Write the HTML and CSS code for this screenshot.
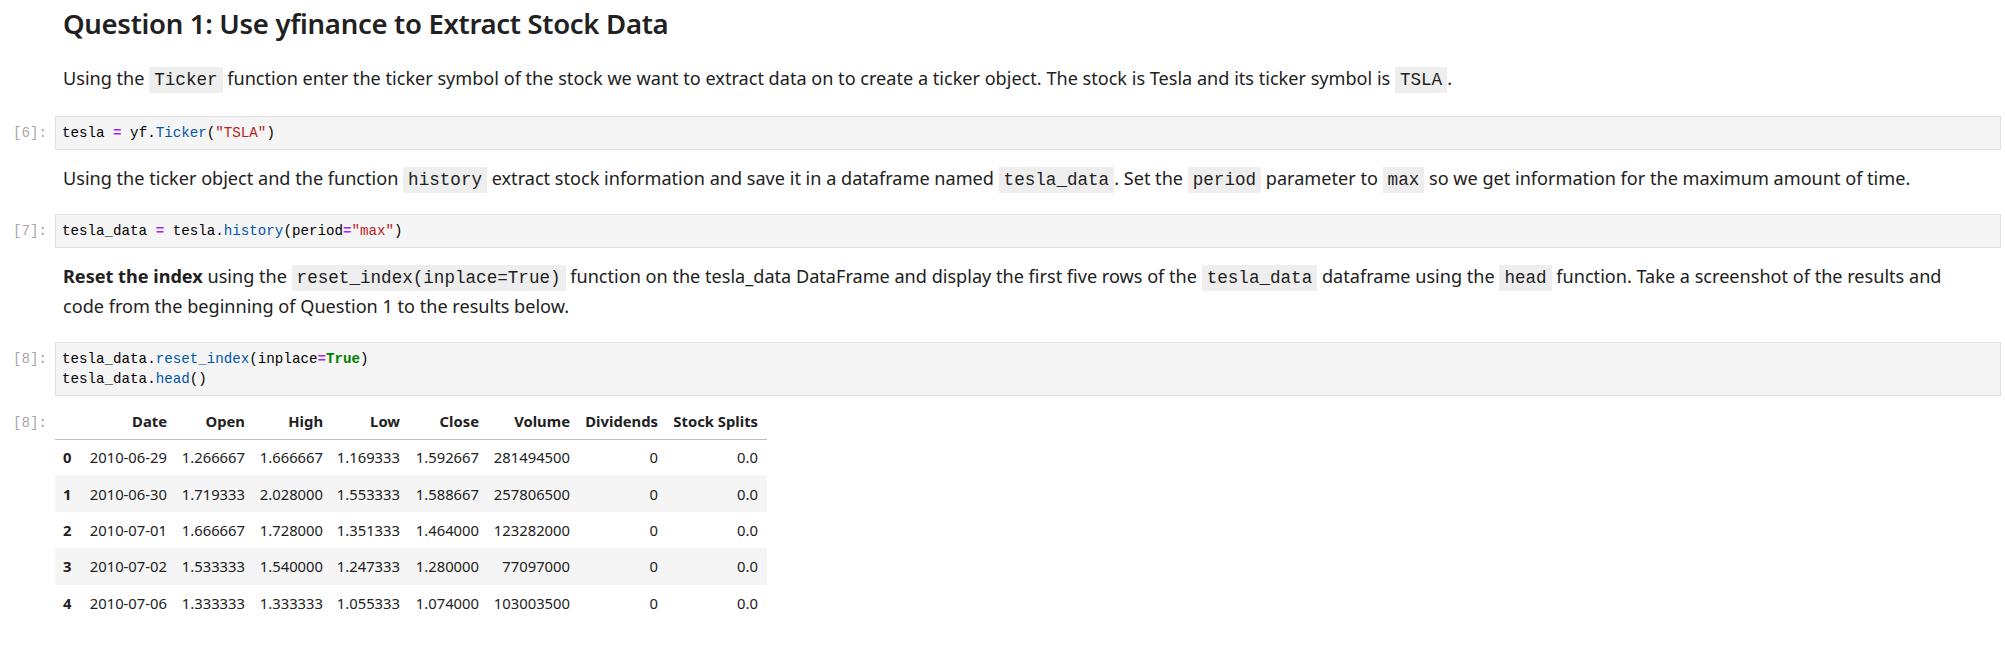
FILE: index.html
```html
<!DOCTYPE html>
<html>
<head>
<meta charset="utf-8">
<link rel="stylesheet" href="styles.css">
</head>
<body>
<div class="notebook">
  <div class="cell md first">
    <div class="prompt"></div>
    <div class="content">
      <h2 class="title">Question 1: Use yfinance to Extract Stock Data</h2>
      <p class="para">Using the <code class="ic">Ticker</code> function enter the ticker symbol of the stock we want to extract data on to create a ticker object. The stock is Tesla and its ticker symbol is <code class="ic">TSLA</code>.</p>
    </div>
  </div>

  <div class="cell code">
    <div class="prompt">[6]:</div>
    <div class="editor"><pre class="src">tesla <span class="op">=</span> yf.<span class="pr">Ticker</span>(<span class="st">"TSLA"</span>)</pre></div>
  </div>

  <div class="cell md">
    <div class="prompt"></div>
    <div class="content">
      <p class="para">Using the ticker object and the function <code class="ic">history</code> extract stock information and save it in a dataframe named <code class="ic">tesla_data</code>. Set the <code class="ic">period</code> parameter to <code class="ic">max</code> so we get information for the maximum amount of time.</p>
    </div>
  </div>

  <div class="cell code">
    <div class="prompt">[7]:</div>
    <div class="editor"><pre class="src">tesla_data <span class="op">=</span> tesla.<span class="pr">history</span>(period<span class="op">=</span><span class="st">"max"</span>)</pre></div>
  </div>

  <div class="cell md">
    <div class="prompt"></div>
    <div class="content">
      <p class="para"><strong>Reset the index</strong> using the <code class="ic">reset_index(inplace=True)</code> function on the tesla_data DataFrame and display the first five rows of the <code class="ic">tesla_data</code> dataframe using the <code class="ic">head</code> function. Take a screenshot of the results and code from the beginning of Question 1 to the results below.</p>
    </div>
  </div>

  <div class="cell code">
    <div class="prompt">[8]:</div>
    <div class="editor"><pre class="src">tesla_data.<span class="pr">reset_index</span>(inplace<span class="op">=</span><span class="kw">True</span>)
tesla_data.<span class="pr">head</span>()</pre></div>
  </div>

  <div class="cell output">
    <div class="prompt out">[8]:</div>
    <div class="outarea">
      <table class="df">
        <colgroup>
          <col class="c-idx"><col class="c-date"><col class="c-num"><col class="c-num"><col class="c-low"><col class="c-close"><col class="c-vol"><col class="c-div"><col class="c-split">
        </colgroup>
        <thead>
          <tr><th></th><th>Date</th><th>Open</th><th>High</th><th>Low</th><th>Close</th><th>Volume</th><th>Dividends</th><th>Stock Splits</th></tr>
        </thead>
        <tbody>
          <tr><th>0</th><td>2010-06-29</td><td>1.266667</td><td>1.666667</td><td>1.169333</td><td>1.592667</td><td>281494500</td><td>0</td><td>0.0</td></tr>
          <tr><th>1</th><td>2010-06-30</td><td>1.719333</td><td>2.028000</td><td>1.553333</td><td>1.588667</td><td>257806500</td><td>0</td><td>0.0</td></tr>
          <tr><th>2</th><td>2010-07-01</td><td>1.666667</td><td>1.728000</td><td>1.351333</td><td>1.464000</td><td>123282000</td><td>0</td><td>0.0</td></tr>
          <tr><th>3</th><td>2010-07-02</td><td>1.533333</td><td>1.540000</td><td>1.247333</td><td>1.280000</td><td>77097000</td><td>0</td><td>0.0</td></tr>
          <tr><th>4</th><td>2010-07-06</td><td>1.333333</td><td>1.333333</td><td>1.055333</td><td>1.074000</td><td>103003500</td><td>0</td><td>0.0</td></tr>
        </tbody>
      </table>
    </div>
  </div>
</div>
</body>
</html>
```

FILE: styles.css
```css
html, body {
  margin: 0;
  padding: 0;
  background: #ffffff;
}

.notebook {
  width: 2005px;
  font-family: "Noto Sans", "Open Sans", sans-serif;
  color: #212121;
}

.cell {
  display: flex;
  align-items: flex-start;
}

.prompt {
  width: 55px;
  flex: none;
  box-sizing: border-box;
  padding-right: 8px;
  text-align: right;
  font-family: "Liberation Mono", monospace;
  font-size: 14.2px;
  line-height: 20px;
  color: #a8a8a8;
}

.content {
  flex: 1;
  padding-left: 8px;
  padding-right: 30px;
  min-width: 0;
}

.first {
  padding-top: 6px;
}

.title {
  margin: 0;
  font-size: 27.5px;
  letter-spacing: -0.3px;
  line-height: 36px;
  font-weight: 600;
  color: #212121;
}

.para {
  margin: 0;
  font-size: 18.1px;
  line-height: 30px;
}

.md {
  margin-top: 13px;
}

.md.first {
  margin-top: 0;
}

.md.first .para {
  margin-top: 21px;
}

.code {
  margin-top: 21px;
}

.first + .code {
  margin-top: 23px;
}

.ic {
  font-family: "Liberation Mono", monospace;
  font-size: 17.6px;
  line-height: 1;
  background: #eeeeee;
  padding: 3px 5px;
  color: #212121;
}

.para strong {
  font-weight: 700;
}

.editor {
  flex: 1;
  border: 1px solid #e0e0e0;
  background: #f5f5f5;
  padding: 6px 6px;
  margin-right: 4px;
  min-width: 0;
}

.src {
  margin: 0;
  font-family: "Liberation Mono", monospace;
  font-size: 14.2px;
  line-height: 20px;
  color: #000000;
}

.code .prompt {
  padding-top: 7px;
}

.op {
  color: #aa22ff;
  font-weight: 700;
}

.pr {
  color: #0055aa;
}

.st {
  color: #ba2121;
}

.kw {
  color: #008000;
  font-weight: 700;
}

.output {
  margin-top: 7px;
}

.output .prompt {
  padding-top: 10px;
}

.outarea {
  flex: 1;
}

.df {
  border-collapse: collapse;
  table-layout: fixed;
  width: 712px;
  font-family: "Noto Sans", "Open Sans", sans-serif;
  font-size: 14.8px;
  color: #212121;
}

.c-idx { width: 25px; }
.c-date { width: 96px; }
.c-num { width: 78px; }
.c-low { width: 77px; }
.c-close { width: 79px; }
.c-vol { width: 91px; }
.c-div { width: 88px; }
.c-split { width: 100px; }

.df th,
.df td {
  text-align: right;
  padding: 0 9px 0 0;
  height: 36.4px;
  line-height: 20px;
  white-space: nowrap;
  box-sizing: border-box;
}

.df thead th {
  font-weight: 700;
  border-bottom: 1px solid #bdbdbd;
  height: 36px;
}

.df tbody th {
  font-weight: 700;
  text-align: left;
  padding-left: 8px;
}

.df tbody tr:nth-child(odd) {
  background: #ffffff;
}

.df tbody tr:nth-child(even) {
  background: #f5f5f5;
}
```
